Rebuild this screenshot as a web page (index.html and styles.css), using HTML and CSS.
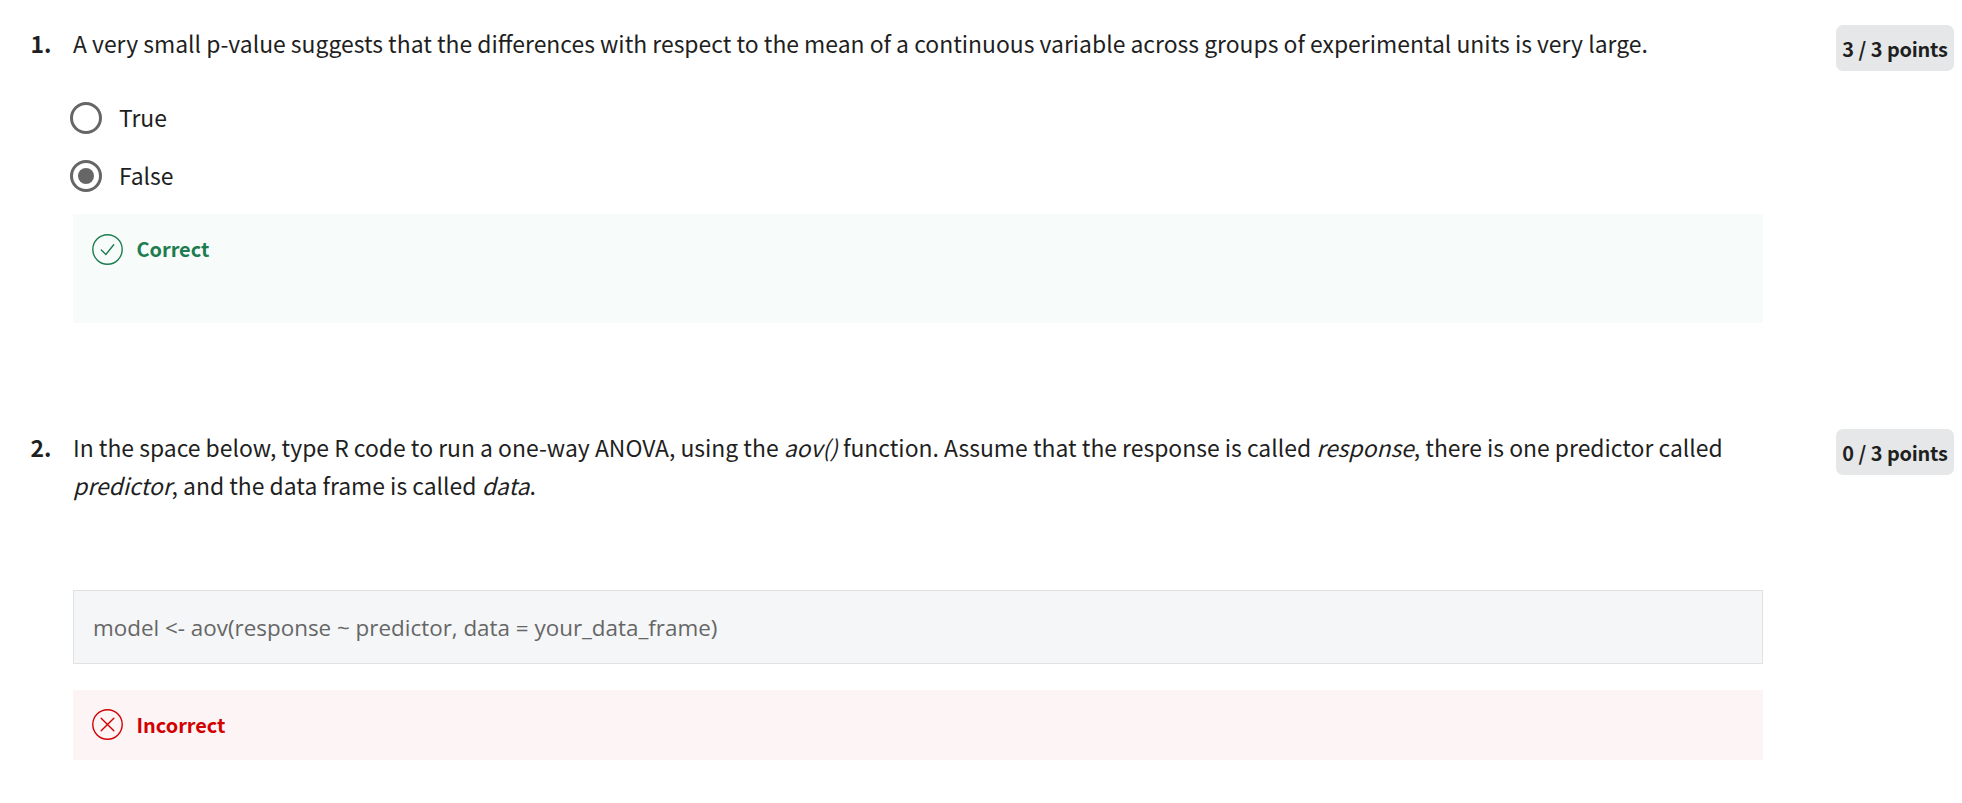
FILE: index.html
```html
<!DOCTYPE html>
<html lang="en">
<head>
<meta charset="utf-8">
<title>Quiz results</title>
<link rel="stylesheet" href="styles.css">
</head>
<body>
<main class="quiz">
  <section class="question first">
    <div class="number">1.</div>
    <div class="content">
      <p class="prompt"><span class="line">A very small p-value suggests that the differences with respect to the mean of a continuous variable across groups of experimental units is very large.</span></p>
      <div class="options">
        <div class="option"><span class="radio"></span><span class="label">True</span></div>
        <div class="option"><span class="radio checked"></span><span class="label">False</span></div>
      </div>
      <div class="feedback correct">
        <svg class="icon" viewBox="0 0 31 31"><circle cx="15.5" cy="15.5" r="14.7"/><path d="M9.3 16l4.6 4.5 7.8-9.7"/></svg>
        <span>Correct</span>
      </div>
    </div>
    <div class="points">3 / 3 points</div>
  </section>
  <section class="question">
    <div class="number">2.</div>
    <div class="content">
      <p class="prompt"><span class="line">In the space below, type R code to run a one-way ANOVA, using the <em>aov()</em> function. Assume that the response is called <em>response</em>, there is one predictor called</span> <span class="line"><em>predictor</em>, and the data frame is called <em>data</em>.</span></p>
      <div class="answer"><span>model &lt;- aov(response ~ predictor, data = your_data_frame)</span></div>
      <div class="feedback incorrect">
        <svg class="icon" viewBox="0 0 31 31"><circle cx="15.5" cy="15.5" r="14.7"/><path d="M9.2 9.2l12.6 12.6M21.8 9.2L9.2 21.8"/></svg>
        <span>Incorrect</span>
      </div>
    </div>
    <div class="points">0 / 3 points</div>
  </section>
</main>
</body>
</html>
```
FILE: styles.css
```css
* { box-sizing: border-box; }
body {
  margin: 0;
  background: #fff;
  color: #1f1f1f;
  font-family: "Source Sans Pro", "Noto Sans CJK SC", sans-serif;
  font-size: 22.92px;
  line-height: 38px;
}
.quiz { padding-top: 24px; }
.question {
  display: grid;
  grid-template-columns: 73px 1690px 118px;
  align-items: start;
}
.question.first { height: 404px; }
.number { padding-left: 30.5px; font-weight: 700; }
.points {
  margin: 1px 0 0 73px;
  width: 118px;
  height: 46px;
  border-radius: 7px;
  background: #e5e7e8;
  font-size: 19.9px;
  letter-spacing: -0.22px;
  word-spacing: 0.4px;
  font-weight: 700;
  line-height: 48px;
  text-align: center;
  white-space: nowrap;
}
.prompt { margin: 0; }
.line { display: block; white-space: nowrap; }
.options { margin-top: 35px; }
.option { display: flex; align-items: center; height: 58px; gap: 16.5px; }
.option:first-child { margin-top: -8px; }
.label { padding-bottom: 2px; }
.radio {
  display: flex;
  align-items: center;
  justify-content: center;
  width: 32px;
  height: 32px;
  margin-left: -2.6px;
  border: 3px solid #666;
  border-radius: 50%;
}
.radio.checked::after {
  content: "";
  width: 16px;
  height: 16px;
  border-radius: 50%;
  background: #666;
}
.feedback {
  display: flex;
  align-items: flex-start;
  gap: 13.5px;
  padding: 20px 19px;
  font-size: 19.9px;
  font-weight: 700;
  line-height: 31px;
}
.icon {
  width: 31px;
  height: 31px;
  fill: none;
  stroke: currentColor;
  stroke-width: 1.4;
  stroke-linecap: round;
}
.correct { height: 109px; margin-top: 9px; background: #f7fbf9; color: #1d7c50; line-height: 29px; }
.incorrect { height: 70px; margin-top: 26px; padding-top: 19px; background: #fdf4f5; color: #d30001; }
.answer {
  height: 74px;
  margin-top: 86px;
  padding: 0 19px;
  border: 1px solid #e1e1e1;
  background: #f5f6f8;
  color: #666;
  font-family: "Open Sans", "Noto Sans", sans-serif;
  font-size: 22.42px;
  line-height: 74px;
}
```
